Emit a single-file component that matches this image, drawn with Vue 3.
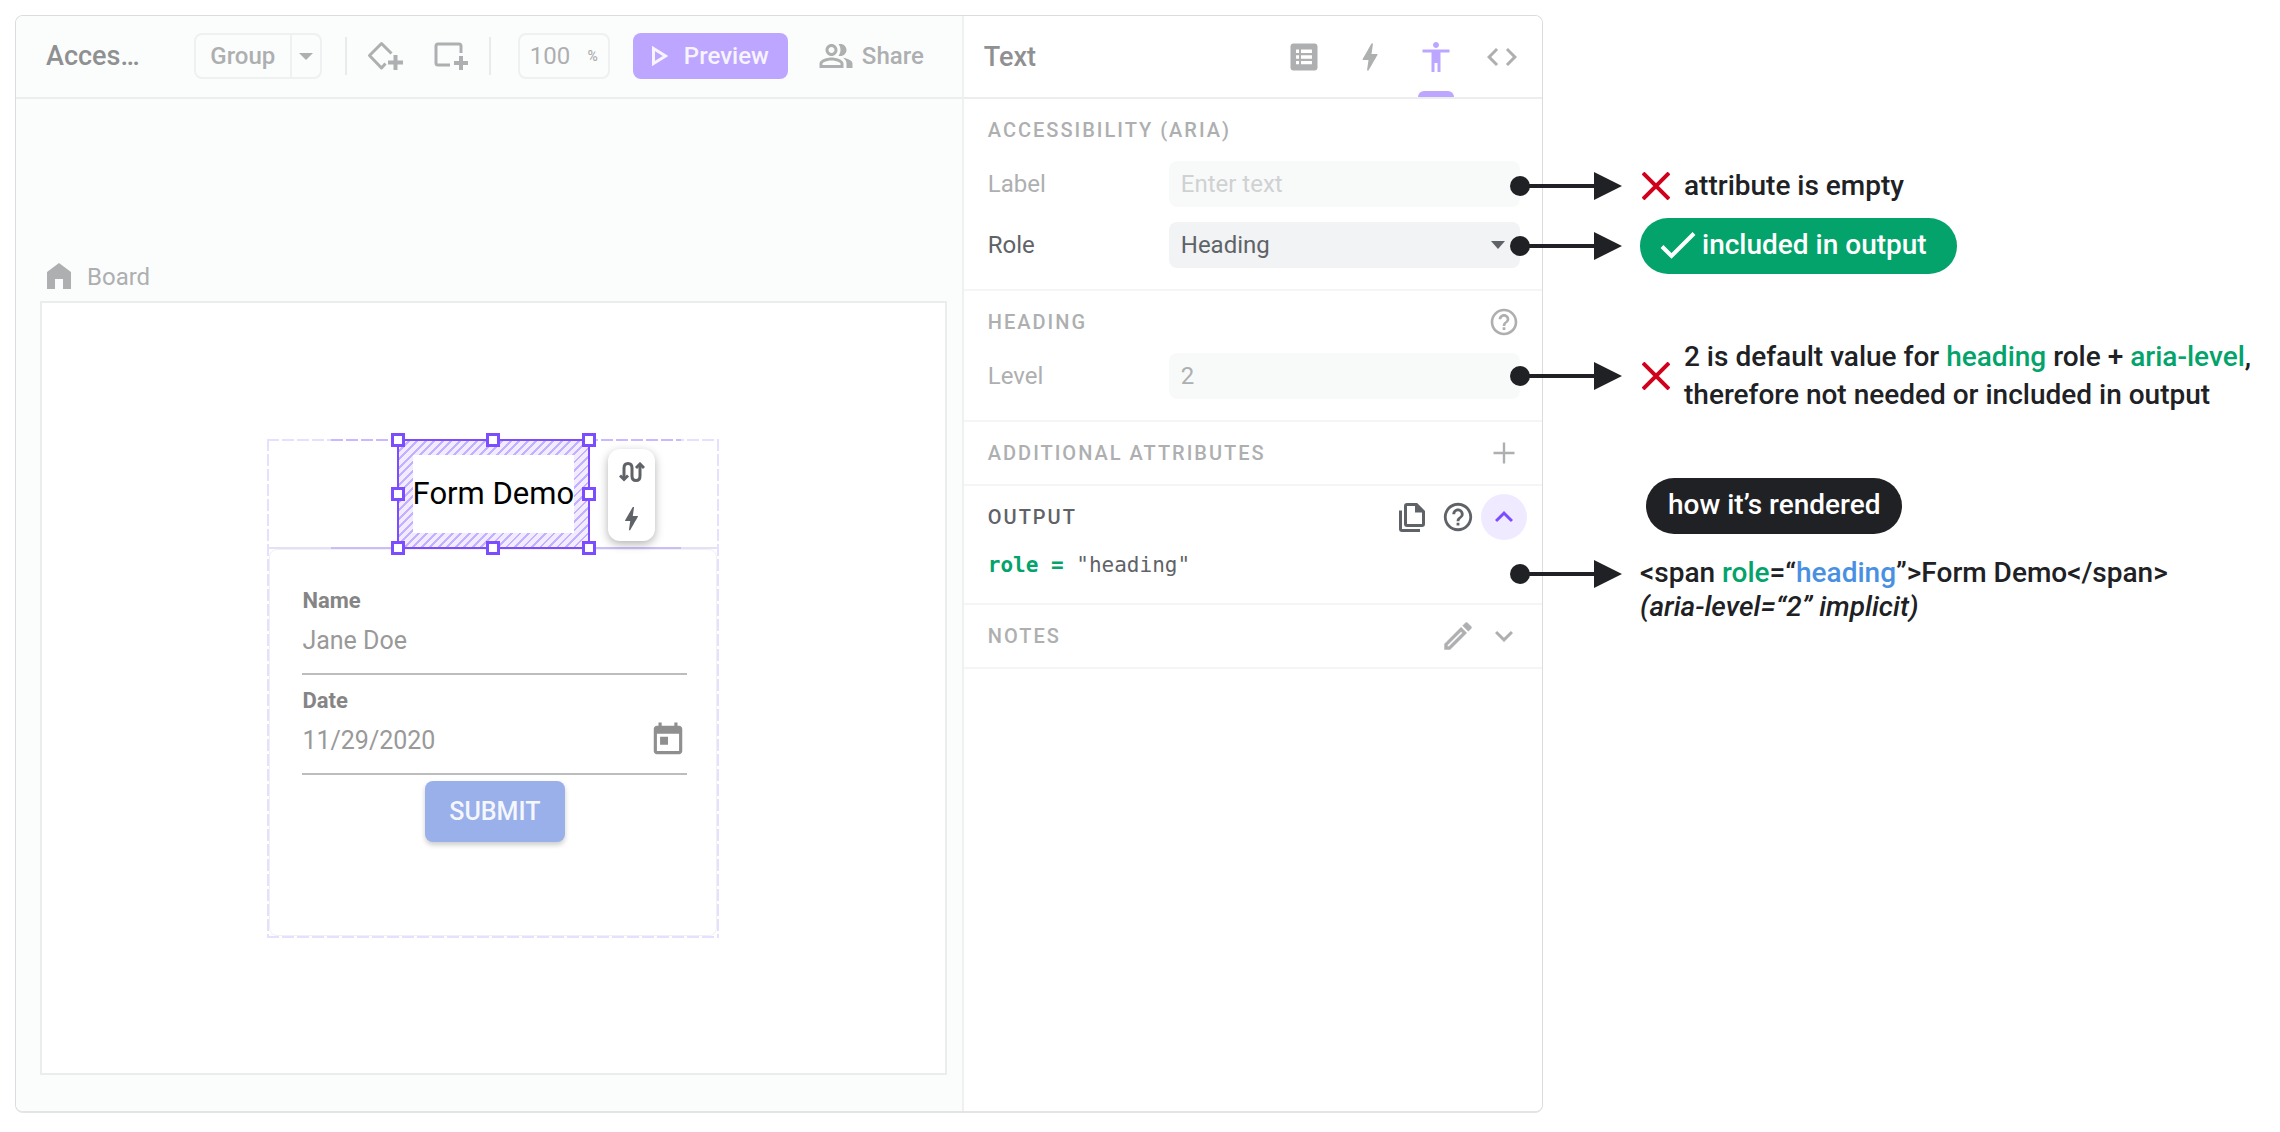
<script setup>
import { ref } from 'vue'

const label = ref('')
const role = ref('Heading')
const level = ref('2')
const zoom = ref('100')
const name = ref('Jane Doe')
const date = ref('11/29/2020')

const handles = ['nw', 'n', 'ne', 'w', 'e', 'sw', 's', 'se']

const arrow = 'M10 12h74V0l28 14-28 14V16H10z'

const icons = {
  bolt: 'M11 21h-1l1-7H7.5c-.88 0-.33-.75-.31-.78C8.48 10.94 10.42 7.54 13.01 3h1l-1 7h3.51c.4 0 .62.19.4.66C12.97 17.55 11 21 11 21z',
  person: 'M12 2c1.1 0 2 .9 2 2s-.9 2-2 2-2-.9-2-2 .9-2 2-2zm9 7h-6v13h-2v-6h-2v6H9V9H3V7h18v2z',
  code: 'M9.4 16.6L4.8 12l4.6-4.6L8 6l-6 6 6 6 1.4-1.4zm5.2 0l4.6-4.6-4.6-4.6L16 6l6 6-6 6-1.4-1.4z',
  list: 'M4.8 3h14.4c1 0 1.8.8 1.8 1.8v14.4c0 1-.8 1.8-1.8 1.8H4.8c-1 0-1.8-.8-1.8-1.8V4.8C3 3.8 3.8 3 4.8 3zM6.7 7v2.3h2V7zM10 7v2.3h7.3V7zM6.7 10.8v2.3h2v-2.3zM10 10.8v2.3h7.3v-2.3zM6.7 14.6v2.3h2v-2.3zM10 14.6v2.3h7.3v-2.3z',
  help: 'M11 18h2v-2h-2v2zm1-16C6.48 2 2 6.48 2 12s4.48 10 10 10 10-4.48 10-10S17.52 2 12 2zm0 18c-4.41 0-8-3.59-8-8s3.59-8 8-8 8 3.59 8 8-3.59 8-8 8zm0-14c-2.21 0-4 1.79-4 4h2c0-1.1.9-2 2-2s2 .9 2 2c0 2-3 1.75-3 5h2c0-2.25 3-2.5 3-5 0-2.21-1.79-4-4-4z',
  plus: 'M19 12.8h-6.2v6.2h-1.6v-6.2H5v-1.6h6.2V5h1.6v6.2H19z',
  down: 'M7.41 8.59L12 13.17l4.59-4.58L18 10l-6 6-6-6z',
  up: 'M7.41 15.41L12 10.83l4.59 4.58L18 14l-6-6-6 6z',
  pencil: 'M14.06 9.02l.92.92L5.92 19H5v-.92l9.06-9.06M17.66 3c-.25 0-.51.1-.7.29l-1.83 1.83 3.75 3.75 1.83-1.83c.39-.39.39-1.02 0-1.41l-2.34-2.34c-.2-.2-.45-.29-.71-.29zm-3.6 3.19L3 17.25V21h3.75L17.81 9.94l-3.75-3.75z',
  people: 'M16.67 13.13C18.04 14.06 19 15.32 19 17v3h4v-3c0-2.18-3.57-3.47-6.33-3.87zM15 12c2.21 0 4-1.79 4-4s-1.79-4-4-4c-.47 0-.91.1-1.33.24C14.5 5.27 15 6.58 15 8s-.5 2.73-1.33 3.76c.42.14.86.24 1.33.24zM9 12c2.21 0 4-1.79 4-4s-1.79-4-4-4-4 1.79-4 4 1.79 4 4 4zm0-6c1.1 0 2 .9 2 2s-.9 2-2 2-2-.9-2-2 .9-2 2-2zM9 13c-2.67 0-8 1.34-8 4v3h16v-3c0-2.66-5.33-4-8-4zm6 5H3v-.99C3.2 16.29 6.3 15 9 15s5.8 1.29 6 2v1z',
  calendar: 'M19 3h-1V1h-2v2H8V1H6v2H5c-1.11 0-1.99.9-1.99 2L3 19c0 1.1.89 2 2 2h14c1.1 0 2-.9 2-2V5c0-1.1-.9-2-2-2zm0 16H5V8h14v11zM7 10h5v5H7z'
}

const tabs = [
  { id: 'list', label: 'Properties' },
  { id: 'bolt', label: 'Interactions' },
  { id: 'person', label: 'Accessibility' },
  { id: 'code', label: 'Code' }
]
const activeTab = ref('person')
</script>

<template>
  <div class="page">
    <main class="editor">
      <section class="workspace">
        <header class="toolbar">
          <h1 class="doc-title">Acces…</h1>
          <div class="split">
            <button type="button" class="split-main">Group</button>
            <button type="button" class="split-more" aria-label="More group options">
              <svg width="14" height="7" viewBox="0 0 14 7"><path d="M0 0h14L7 7z" /></svg>
            </button>
          </div>
          <span class="rule"></span>
          <button type="button" class="tool" aria-label="Add component">
            <svg width="36" height="30" viewBox="0 0 36 30" fill="none" stroke="currentColor" stroke-width="3">
              <path d="M24.5 12.5 14.5 2.5 2.5 14.5 14.5 27l4-4.5" stroke-linejoin="round" />
              <path d="M28.5 14v15M21 21.5h15" stroke-width="4" />
            </svg>
          </button>
          <button type="button" class="tool tool-rect" aria-label="Add board">
            <svg width="36" height="30" viewBox="0 0 36 30" fill="none" stroke="currentColor" stroke-width="3">
              <path d="M28 12V5q0-2-2-2H5Q3 3 3 5v17q0 2 2 2h12" />
              <path d="M28 15v14M21 22h14" stroke-width="4" />
            </svg>
          </button>
          <span class="rule"></span>
          <label class="zoom">
            <input v-model="zoom" type="text" aria-label="Zoom" />
            <span>%</span>
          </label>
          <button type="button" class="preview">
            <svg width="16" height="20" viewBox="0 0 16 20" fill="none" stroke="currentColor" stroke-width="3">
              <path d="M1.5 2.5v15L13.5 10z" />
            </svg>
            Preview
          </button>
          <button type="button" class="share">
            <svg width="36" height="36" viewBox="0 0 24 24"><path :d="icons.people" /></svg>
            Share
          </button>
        </header>

        <div class="canvas">
          <div class="board-label">
            <svg width="24" height="26" viewBox="0 0 24 26"><path d="M12 0 24 9v17h-8V16H8v10H0V9z" /></svg>
            <span>Board</span>
          </div>
          <div class="board">
            <div class="frame">
              <div class="heading-row">
                <span class="edge edge-top"></span>
                <span class="edge edge-bottom"></span>
                <div class="selection">
                  <span class="selected-text" role="heading" aria-level="2">Form Demo</span>
                  <i v-for="h in handles" :key="h" :class="['handle', h]"></i>
                  <div class="quick-actions">
                    <button type="button" aria-label="Connect">
                      <svg width="26" height="20" viewBox="0 0 26 20" fill="none" stroke="currentColor" stroke-width="3">
                        <path d="M5 17V6q0-4.5 4-4.5T13 6v8q0 4.5 4 4.5t4-4.5V3" />
                        <path d="M1 13.5 5 17.5l4-4M17 6l4-4 4 4" />
                      </svg>
                    </button>
                    <button type="button" aria-label="Add interaction">
                      <svg width="31" height="31" viewBox="0 0 24 24"><path :d="icons.bolt" /></svg>
                    </button>
                  </div>
                </div>
              </div>
              <form class="card" @submit.prevent>
                <div class="field">
                  <label for="name">Name</label>
                  <div class="control"><input id="name" v-model="name" type="text" /></div>
                </div>
                <div class="field">
                  <label for="date">Date</label>
                  <div class="control">
                    <input id="date" v-model="date" type="text" />
                    <svg width="38" height="38" viewBox="0 0 24 24"><path :d="icons.calendar" /></svg>
                  </div>
                </div>
                <button type="submit" class="submit">SUBMIT</button>
              </form>
            </div>
          </div>
        </div>
      </section>

      <section class="panel">
        <header class="panel-head">
          <h2>Text</h2>
          <nav class="tabs">
            <button
              v-for="tab in tabs"
              :key="tab.id"
              type="button"
              :class="{ active: tab.id === activeTab }"
              :aria-label="tab.label"
              @click="activeTab = tab.id"
            >
              <svg width="36" height="36" viewBox="0 0 24 24"><path fill-rule="evenodd" :d="icons[tab.id]" /></svg>
            </button>
          </nav>
        </header>

        <section class="group">
          <div class="group-head"><h3>ACCESSIBILITY (ARIA)</h3></div>
          <div class="rows">
            <div class="row">
              <label for="aria-label">Label</label>
              <input id="aria-label" v-model="label" type="text" placeholder="Enter text" />
            </div>
            <div class="row strong">
              <label for="aria-role">Role</label>
              <div class="select">
                <select id="aria-role" v-model="role"><option>Heading</option></select>
                <svg width="14" height="8" viewBox="0 0 14 8"><path d="M0 0h14L7 8z" /></svg>
              </div>
            </div>
          </div>
        </section>

        <section class="group">
          <div class="group-head">
            <h3>HEADING</h3>
            <button type="button" aria-label="Heading help">
              <svg width="32" height="32" viewBox="0 0 24 24"><path :d="icons.help" /></svg>
            </button>
          </div>
          <div class="rows">
            <div class="row">
              <label for="aria-level">Level</label>
              <input id="aria-level" v-model="level" type="text" />
            </div>
          </div>
        </section>

        <section class="group">
          <div class="group-head">
            <h3>ADDITIONAL ATTRIBUTES</h3>
            <button type="button" aria-label="Add attribute">
              <svg width="36" height="36" viewBox="0 0 24 24"><path :d="icons.plus" /></svg>
            </button>
          </div>
        </section>

        <section class="group strong">
          <div class="group-head">
            <h3>OUTPUT</h3>
            <button type="button" aria-label="Copy output">
              <svg width="28" height="30" viewBox="0 0 28 30" fill="none" stroke="currentColor" stroke-width="3">
                <path d="M9 2.5h9.5l7 7V22q0 1.5-1.5 1.5H9Q7.5 23.5 7.5 22V4Q7.5 2.5 9 2.5z" />
                <path d="M17 2v8.5h9z" fill="currentColor" stroke="none" />
                <path d="M2.5 8.5V27q0 1.5 1.5 1.5h18" />
              </svg>
            </button>
            <button type="button" aria-label="Output help">
              <svg width="34" height="34" viewBox="0 0 24 24"><path :d="icons.help" /></svg>
            </button>
            <button type="button" class="toggle" aria-label="Collapse output">
              <svg width="36" height="36" viewBox="0 0 24 24"><path :d="icons.up" /></svg>
            </button>
          </div>
          <code class="output"><b>role =</b> "heading"</code>
        </section>

        <section class="group">
          <div class="group-head">
            <h3>NOTES</h3>
            <button type="button" aria-label="Edit notes">
              <svg width="36" height="36" viewBox="0 0 24 24">
                <path :d="icons.pencil" stroke="currentColor" stroke-width=".3" stroke-linejoin="round" />
              </svg>
            </button>
            <button type="button" aria-label="Expand notes">
              <svg width="36" height="36" viewBox="0 0 24 24"><path :d="icons.down" /></svg>
            </button>
          </div>
        </section>
      </section>
    </main>

    <aside class="notes">
      <div class="note">
        <svg class="arrow" width="112" height="28" viewBox="0 0 112 28"><circle cx="10" cy="14" r="10" /><path :d="arrow" /></svg>
        <svg class="cross" width="28" height="28" viewBox="0 0 28 28"><path d="M1 1l26 26M27 1L1 27" /></svg>
        <p>attribute is empty</p>
      </div>
      <div class="note">
        <svg class="arrow" width="112" height="28" viewBox="0 0 112 28"><circle cx="10" cy="14" r="10" /><path :d="arrow" /></svg>
        <p class="pill green">
          <svg width="36" height="28" viewBox="0 0 36 28" fill="none" stroke="currentColor" stroke-width="4"><path d="M2 15.5 11.5 25 34 2.5" /></svg>
          included in output
        </p>
      </div>
      <div class="note tall">
        <svg class="arrow" width="112" height="28" viewBox="0 0 112 28"><circle cx="10" cy="14" r="10" /><path :d="arrow" /></svg>
        <svg class="cross" width="28" height="28" viewBox="0 0 28 28"><path d="M1 1l26 26M27 1L1 27" /></svg>
        <p>2 is default value for <em>heading</em> role + <em>aria-level</em>,<br />therefore not needed or included in output</p>
      </div>
      <p class="pill dark">how it’s rendered</p>
      <div class="note rendered">
        <svg class="arrow" width="112" height="28" viewBox="0 0 112 28"><circle cx="10" cy="14" r="10" /><path :d="arrow" /></svg>
        <p>&lt;span <em>role</em>=“<strong>heading</strong>”&gt;Form Demo&lt;/span&gt;<br /><i>(aria-level=“2” implicit)</i></p>
      </div>
    </aside>
  </div>
</template>

<style>
body {
  margin: 0;
  background: #fff;
}
</style>

<style scoped>
* {
  box-sizing: border-box;
}

.page {
  display: flex;
  align-items: stretch;
  padding: 15px 0 20px 15px;
  font-family: Roboto, "Liberation Sans", sans-serif;
  color: #202124;
}

h1, h2, h3, p {
  margin: 0;
  font-weight: 500;
}

button, input, select {
  font: inherit;
  color: inherit;
  border: 0;
  padding: 0;
  background: none;
  min-width: 0;
}

button {
  display: flex;
  align-items: center;
  justify-content: center;
}

svg {
  flex: none;
  display: block;
}

svg:not([fill]) {
  fill: currentColor;
}

.editor {
  flex: 1;
  display: flex;
  min-width: 0;
  border: 1px solid #dadce0;
  border-bottom: 2px solid #e2e4e6;
  border-radius: 8px;
  overflow: hidden;
  color: #aeafb0;
}

.workspace {
  flex: 947;
  display: flex;
  flex-direction: column;
  background: #fbfdfd;
  min-width: 0;
}

/* Toolbar */
.toolbar {
  display: flex;
  align-items: center;
  height: 83px;
  padding: 0 38px 1px 30px;
  border-bottom: 2px solid #ebedef;
  font-size: 24px;
  font-weight: 500;
}

.doc-title {
  flex: 1;
  font-size: 27px;
  color: #8f9091;
}

.split {
  display: flex;
  height: 46px;
  border: 2px solid #eff0f1;
  border-radius: 8px;
}

.split-main {
  width: 94px;
}

.split-more {
  width: 30px;
  border-left: 2px solid #eff0f1;
}

.rule {
  width: 2px;
  height: 38px;
  margin: 0 20px 0 23px;
  background: #e8eaeb;
}

.tool-rect {
  margin: 0 -3px 0 30px;
}

.zoom {
  display: flex;
  align-items: center;
  justify-content: space-between;
  width: 92px;
  height: 46px;
  margin: 0 23px 0 7px;
  padding: 0 10px;
  border: 2px solid #eff0f1;
  border-radius: 8px;
}

.zoom input {
  width: 48px;
  font-weight: 400;
}

.zoom span {
  font-size: 14px;
}

.preview {
  gap: 16px;
  width: 155px;
  height: 46px;
  border-radius: 8px;
  background: #bda6ff;
  color: #f7f3ff;
}

.share {
  gap: 8px;
  margin-left: 30px;
}

/* Canvas */
.canvas {
  flex: 1;
  display: flex;
  flex-direction: column;
  padding: 162px 15px 36px 24px;
}

.board-label {
  display: flex;
  align-items: flex-start;
  gap: 16px;
  height: 40px;
  padding: 2px 7px 0;
  font-size: 24px;
  line-height: 28px;
}

.board {
  flex: 1;
  display: flex;
  justify-content: center;
  padding: 136px 0 135px;
  border: 2px solid #ebedec;
  background: #fff;
}

.frame {
  width: 452px;
  height: 499px;
  padding: 2px;
  background:
    repeating-linear-gradient(90deg, #e6dfff 0 12px, transparent 12px 15px) top / 100% 2px no-repeat,
    repeating-linear-gradient(90deg, #e6dfff 0 12px, transparent 12px 15px) bottom / 100% 2px no-repeat,
    repeating-linear-gradient(180deg, #e6dfff 0 12px, transparent 12px 15px) left / 2px 100% no-repeat,
    repeating-linear-gradient(180deg, #e6dfff 0 12px, transparent 12px 15px) right / 2px 100% no-repeat;
}

.heading-row {
  position: relative;
  display: flex;
  justify-content: center;
  height: 108px;
  border-bottom: 2px solid #e4e0f6;
}

.edge {
  position: absolute;
  left: 62px;
  right: 36px;
  height: 2px;
}

.edge-top {
  top: -2px;
  background: repeating-linear-gradient(90deg, #c9b9ff 0 12px, #fff 12px 15px);
}

.edge-bottom {
  bottom: -2px;
  background: #cbbef5;
}

.selection {
  position: relative;
  height: 110px;
  margin-top: -2px;
  padding: 14px;
  border: 2px solid #7c4dff;
  background: repeating-linear-gradient(135deg, #c4b0ff 0 2px, #f1ecff 2px 6px);
}

.selected-text {
  display: block;
  background: #fff;
  color: #000;
  font-size: 31px;
  line-height: 78px;
  white-space: nowrap;
}

.handle {
  position: absolute;
  width: 14px;
  height: 14px;
  border: 3px solid #7c4dff;
  background: #fff;
}

.nw, .n, .ne { top: -8px; }
.w, .e { top: calc(50% - 7px); }
.sw, .s, .se { bottom: -8px; }
.nw, .w, .sw { left: -8px; }
.n, .s { left: calc(50% - 7px); }
.ne, .e, .se { right: -8px; }

.quick-actions {
  position: absolute;
  top: 8px;
  left: calc(100% + 20px);
  display: flex;
  flex-direction: column;
  width: 47px;
  border-radius: 12px;
  background: #fff;
  box-shadow: 0 3px 10px rgba(0, 0, 0, 0.3);
  color: #5f6368;
}

.quick-actions button {
  height: 46px;
}

.card {
  display: flex;
  flex-direction: column;
  height: 387px;
  padding: 25px 29px 0 32px;
  border: 1px solid #f1f1f3;
  border-radius: 8px;
}

.field {
  height: 100px;
  padding-top: 10px;
  border-bottom: 2px solid #bdbdbd;
}

.field label {
  display: block;
  font-size: 22px;
  font-weight: 700;
  line-height: 32px;
  color: #858585;
}

.control {
  display: flex;
  align-items: center;
  height: 46px;
  color: #999;
  font-size: 25px;
}

.control input {
  flex: 1;
  height: 46px;
}

.control svg {
  color: #8f8f8f;
}

.submit {
  align-self: center;
  width: 140px;
  height: 61px;
  margin-top: 6px;
  border-radius: 8px;
  background: #99b0ea;
  color: #f5f7fd;
  font-size: 25px;
  font-weight: 500;
  box-shadow: 0 3px 5px rgba(0, 0, 0, 0.2);
}

/* Inspector */
.panel {
  flex: 579;
  min-width: 0;
  border-left: 2px solid #eff0f1;
  background: #fff;
}

.panel-head {
  display: flex;
  height: 83px;
  padding: 0 7px 0 20px;
  border-bottom: 2px solid #ebedef;
}

.panel-head h2 {
  flex: 1;
  font-size: 27px;
  line-height: 82px;
  color: #8f9091;
}

.tabs {
  display: flex;
}

.tabs button {
  position: relative;
  width: 66px;
}

.tabs .active {
  color: #bda6ff;
}

.tabs .active::after {
  content: "";
  position: absolute;
  bottom: 0;
  left: 15px;
  width: 36px;
  height: 6px;
  border-radius: 6px 6px 0 0;
  background: #bda6ff;
}

.group {
  padding-top: 8px;
  border-bottom: 2px solid #f4f5f5;
}

.group-head {
  display: flex;
  align-items: center;
  height: 46px;
  margin-bottom: 8px;
  padding: 0 15px 0 24px;
}

.group-head h3 {
  flex: 1;
  font-size: 20px;
  letter-spacing: 2px;
}

.group-head button {
  width: 46px;
  height: 46px;
}

.group-head .toggle {
  border-radius: 50%;
  background: #efeaff;
  color: #7c4dff;
}

.strong {
  color: #5f6368;
}

.rows {
  display: flex;
  flex-direction: column;
  gap: 15px;
  padding: 0 22px 21px 24px;
}

.row {
  display: flex;
  align-items: center;
  font-size: 24px;
}

.row label {
  flex: none;
  width: 181px;
}

.row > input,
.row select {
  flex: 1;
  width: 100%;
  height: 46px;
  padding: 0 12px;
  border-radius: 8px;
  background: #f8faf9;
}

.row input::placeholder {
  color: #d0d1d2;
}

.select {
  position: relative;
  flex: 1;
}

.row select {
  display: block;
  appearance: none;
  background: #f1f3f4;
}

.select svg {
  position: absolute;
  top: 19px;
  right: 15px;
  pointer-events: none;
}

.output {
  display: block;
  margin-top: -8px;
  padding: 0 24px 13px;
  font-family: "DejaVu Sans Mono", "Liberation Mono", monospace;
  font-size: 21px;
  line-height: 50px;
}

.output b {
  color: #03a36b;
}

/* Annotations */
.notes {
  position: relative;
  flex: none;
  display: flex;
  flex-direction: column;
  align-items: flex-start;
  width: 770px;
  margin-left: -33px;
  padding-top: 143px;
  font-size: 28px;
  line-height: 38px;
  white-space: nowrap;
}

.note {
  display: flex;
  align-items: center;
  min-height: 56px;
  margin-bottom: 4px;
}

.arrow {
  margin-right: 18px;
}

.cross {
  margin: 0 14px 0 2px;
  fill: none;
  stroke: #d0021b;
  stroke-width: 4;
}

.tall {
  margin: 60px 0 64px;
}

.notes em {
  font-style: normal;
  color: #03a36b;
}

.notes strong {
  font-weight: 500;
  color: #4a90e2;
}

.pill {
  display: flex;
  align-items: center;
  height: 56px;
  border-radius: 28px;
  color: #fff;
}

.green {
  gap: 6px;
  padding: 0 30px 2px 20px;
  background: #03a36b;
}

.dark {
  margin: 0 0 22px 136px;
  padding: 0 22px 2px;
  background: #202124;
}

.rendered {
  align-items: flex-start;
  line-height: 34px;
}

.rendered .arrow {
  margin-top: 4px;
}
</style>
